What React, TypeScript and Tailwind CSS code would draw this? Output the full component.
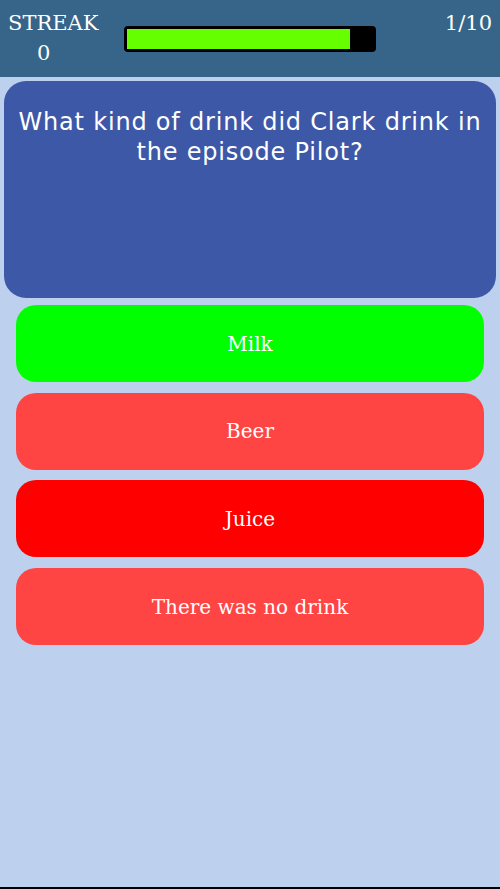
export default function App() {
  const answers = [
    { label: "Milk", color: "bg-[#00ff00]" },
    { label: "Beer", color: "bg-[#ff4444]" },
    { label: "Juice", color: "bg-[#ff0000]" },
    { label: "There was no drink", color: "bg-[#ff4444]" },
  ];

  return (
    <div className="flex h-[889px] w-[500px] flex-col bg-[#bdd1ee] font-['DejaVu_Serif',serif] text-white">
      <div className="flex h-[77px] items-start justify-between bg-[#366589] px-2 pt-[8px]">
        <div className="flex w-[88px] flex-col items-start text-[21px] leading-[30px]">
          <span>STREAK</span>
          <span className="pl-[29px]">0</span>
        </div>
        <div className="mt-[18px] h-[26px] w-[252px] rounded-[4px] bg-black p-[3px] pr-[26px]">
          <div className="h-full w-full bg-[#66ff00]" />
        </div>
        <div className="w-[88px] text-right text-[21px] leading-[30px]">1/10</div>
      </div>

      <div className="mx-1 mt-[4px] h-[217px] rounded-[22px] bg-[#3e58a8] px-3 pt-[26px] text-center font-['DejaVu_Sans',sans-serif] text-[24px] leading-[30px] tracking-[0.8px]">
        What kind of drink did Clark drink in the episode Pilot?
      </div>

      <div className="mt-[7px] flex flex-col gap-[10.7px] px-4">
        {answers.map((a) => (
          <button
            key={a.label}
            className={`flex h-[77px] items-center justify-center rounded-[20px] ${a.color} text-[20px]`}
          >
            {a.label}
          </button>
        ))}
      </div>

      <div className="flex-1" />
      <div className="h-[2px] bg-black" />
    </div>
  );
}
